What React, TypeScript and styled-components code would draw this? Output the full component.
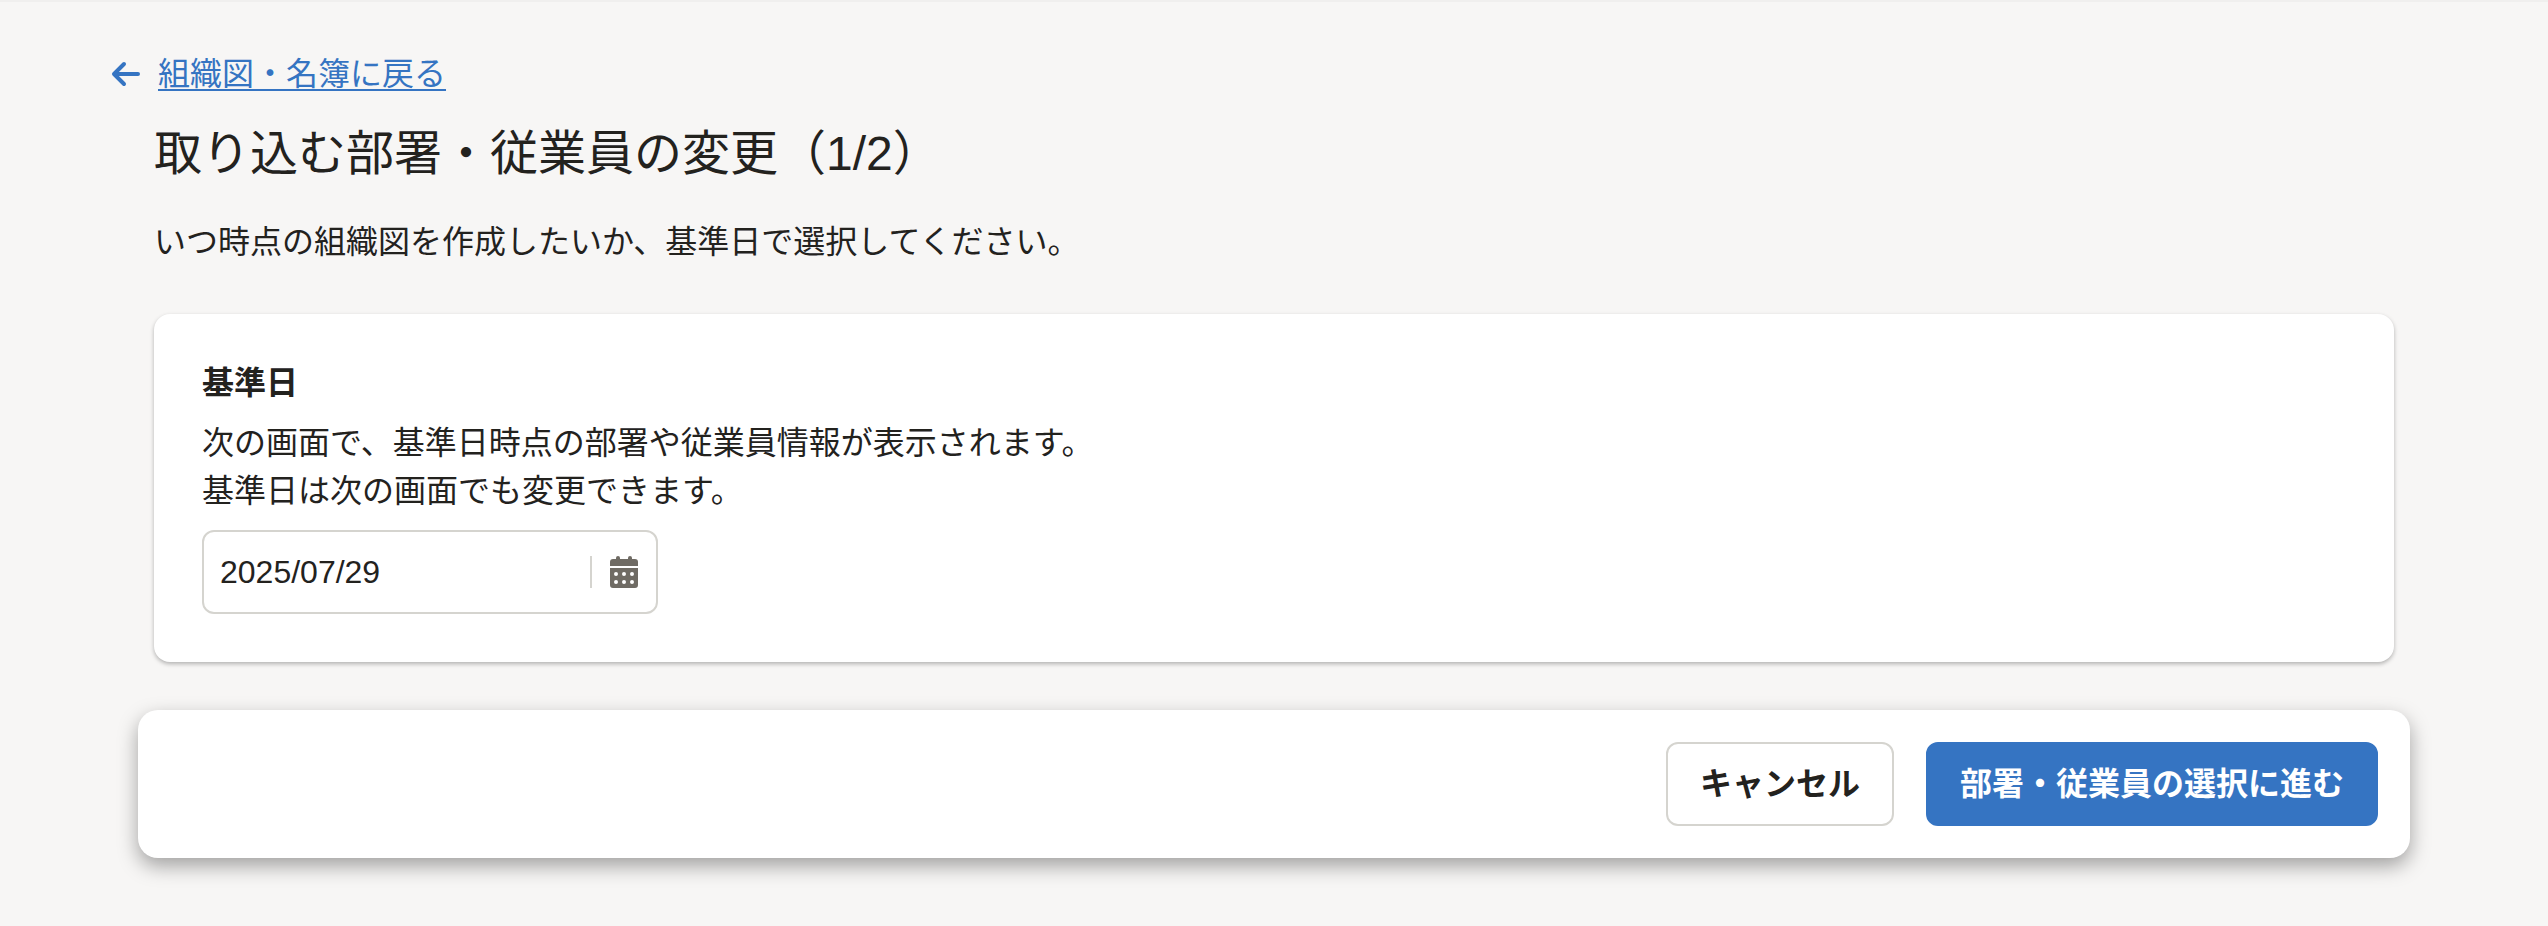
import styled, { createGlobalStyle } from 'styled-components';

const GlobalStyle = createGlobalStyle`
  html,
  body {
    margin: 0;
    padding: 0;
    background: #f7f6f5;
  }

  body {
    color: #23221e;
    font-family: "Liberation Sans", "Noto Sans CJK JP", sans-serif;
    font-size: 32px;
    line-height: 48px;
  }
`;

const Page = styled.div`
  box-sizing: border-box;
  min-height: 926px;
  padding: 48px 154px 0;
  border-top: 2px solid #f0efee;
`;

const BackRow = styled.div`
  display: flex;
  align-items: center;
  gap: 16px;
  margin-left: -44px;
  height: 48px;
  color: #3574c2;
`;

const BackLink = styled.a`
  color: #3574c2;
  text-decoration: underline;
  text-decoration-thickness: 2px;
  text-underline-offset: 4px;
  cursor: pointer;
`;

const Title = styled.h1`
  margin: 20px 0 0;
  font-size: 48px;
  font-weight: 400;
  line-height: 72px;
`;

const Lead = styled.p`
  margin: 28px 0 0;
`;

const Card = styled.section`
  margin-top: 48px;
  padding: 45px 48px 48px;
  background: #ffffff;
  border-radius: 16px;
  box-shadow: 0 2px 4px rgba(0, 0, 0, 0.28);
`;

const Label = styled.h2`
  margin: 0;
  font-size: 32px;
  font-weight: 700;
  line-height: 48px;
`;

const Help = styled.p`
  margin: 12px 0 0;
`;

const DateField = styled.div`
  box-sizing: border-box;
  display: flex;
  align-items: center;
  gap: 16px;
  width: 456px;
  height: 84px;
  margin-top: 15px;
  padding: 0 16px;
  background: #ffffff;
  border: 2px solid #d5d4cf;
  border-radius: 12px;
`;

const DateValue = styled.span`
  flex: 1;
`;

const Divider = styled.span`
  width: 2px;
  height: 32px;
  background: #d5d4cf;
`;

const Footer = styled.footer`
  display: flex;
  justify-content: flex-end;
  gap: 32px;
  margin: 48px -16px 0;
  padding: 32px;
  background: #ffffff;
  border-radius: 20px;
  box-shadow: 0 8px 20px rgba(0, 0, 0, 0.35);
`;

const Button = styled.button<{ $primary?: boolean }>`
  box-sizing: border-box;
  height: 84px;
  padding: 0 32px;
  border: 2px solid ${({ $primary }) => ($primary ? '#3574c2' : '#d5d4cf')};
  border-radius: 12px;
  background: ${({ $primary }) => ($primary ? '#3574c2' : '#ffffff')};
  color: ${({ $primary }) => ($primary ? '#ffffff' : '#23221e')};
  font-family: inherit;
  font-size: 32px;
  font-weight: 700;
  line-height: 48px;
  cursor: pointer;
`;

const ArrowIcon = () => (
  <svg width="32" height="32" viewBox="0 0 32 32" fill="none" stroke="currentColor" strokeWidth="4" strokeLinecap="round" strokeLinejoin="round">
    <path d="M28 16H5M14 6 4 16l10 10" />
  </svg>
);

const CalendarIcon = () => (
  <svg width="32" height="32" viewBox="0 0 32 32" fill="#6f6b64">
    <rect x="8" y="0" width="4" height="6" rx="2" />
    <rect x="20" y="0" width="4" height="6" rx="2" />
    <path d="M5 3h22a3 3 0 0 1 3 3v4H2V6a3 3 0 0 1 3-3Z" />
    <path
      fillRule="evenodd"
      d="M2 12h28v17a3 3 0 0 1-3 3H5a3 3 0 0 1-3-3V12Zm6 4a2 2 0 1 0 0 4 2 2 0 0 0 0-4Zm8 0a2 2 0 1 0 0 4 2 2 0 0 0 0-4Zm8 0a2 2 0 1 0 0 4 2 2 0 0 0 0-4ZM8 24a2 2 0 1 0 0 4 2 2 0 0 0 0-4Zm8 0a2 2 0 1 0 0 4 2 2 0 0 0 0-4Zm8 0a2 2 0 1 0 0 4 2 2 0 0 0 0-4Z"
    />
  </svg>
);

const App = () => (
  <>
    <GlobalStyle />
    <Page>
      <BackRow>
        <ArrowIcon />
        <BackLink>組織図・名簿に戻る</BackLink>
      </BackRow>
      <Title>取り込む部署・従業員の変更（1/2）</Title>
      <Lead>いつ時点の組織図を作成したいか、基準日で選択してください。</Lead>

      <Card>
        <Label>基準日</Label>
        <Help>
          次の画面で、基準日時点の部署や従業員情報が表示されます。
          <br />
          基準日は次の画面でも変更できます。
        </Help>
        <DateField>
          <DateValue>2025/07/29</DateValue>
          <Divider />
          <CalendarIcon />
        </DateField>
      </Card>

      <Footer>
        <Button>キャンセル</Button>
        <Button $primary>部署・従業員の選択に進む</Button>
      </Footer>
    </Page>
  </>
);

export default App;
